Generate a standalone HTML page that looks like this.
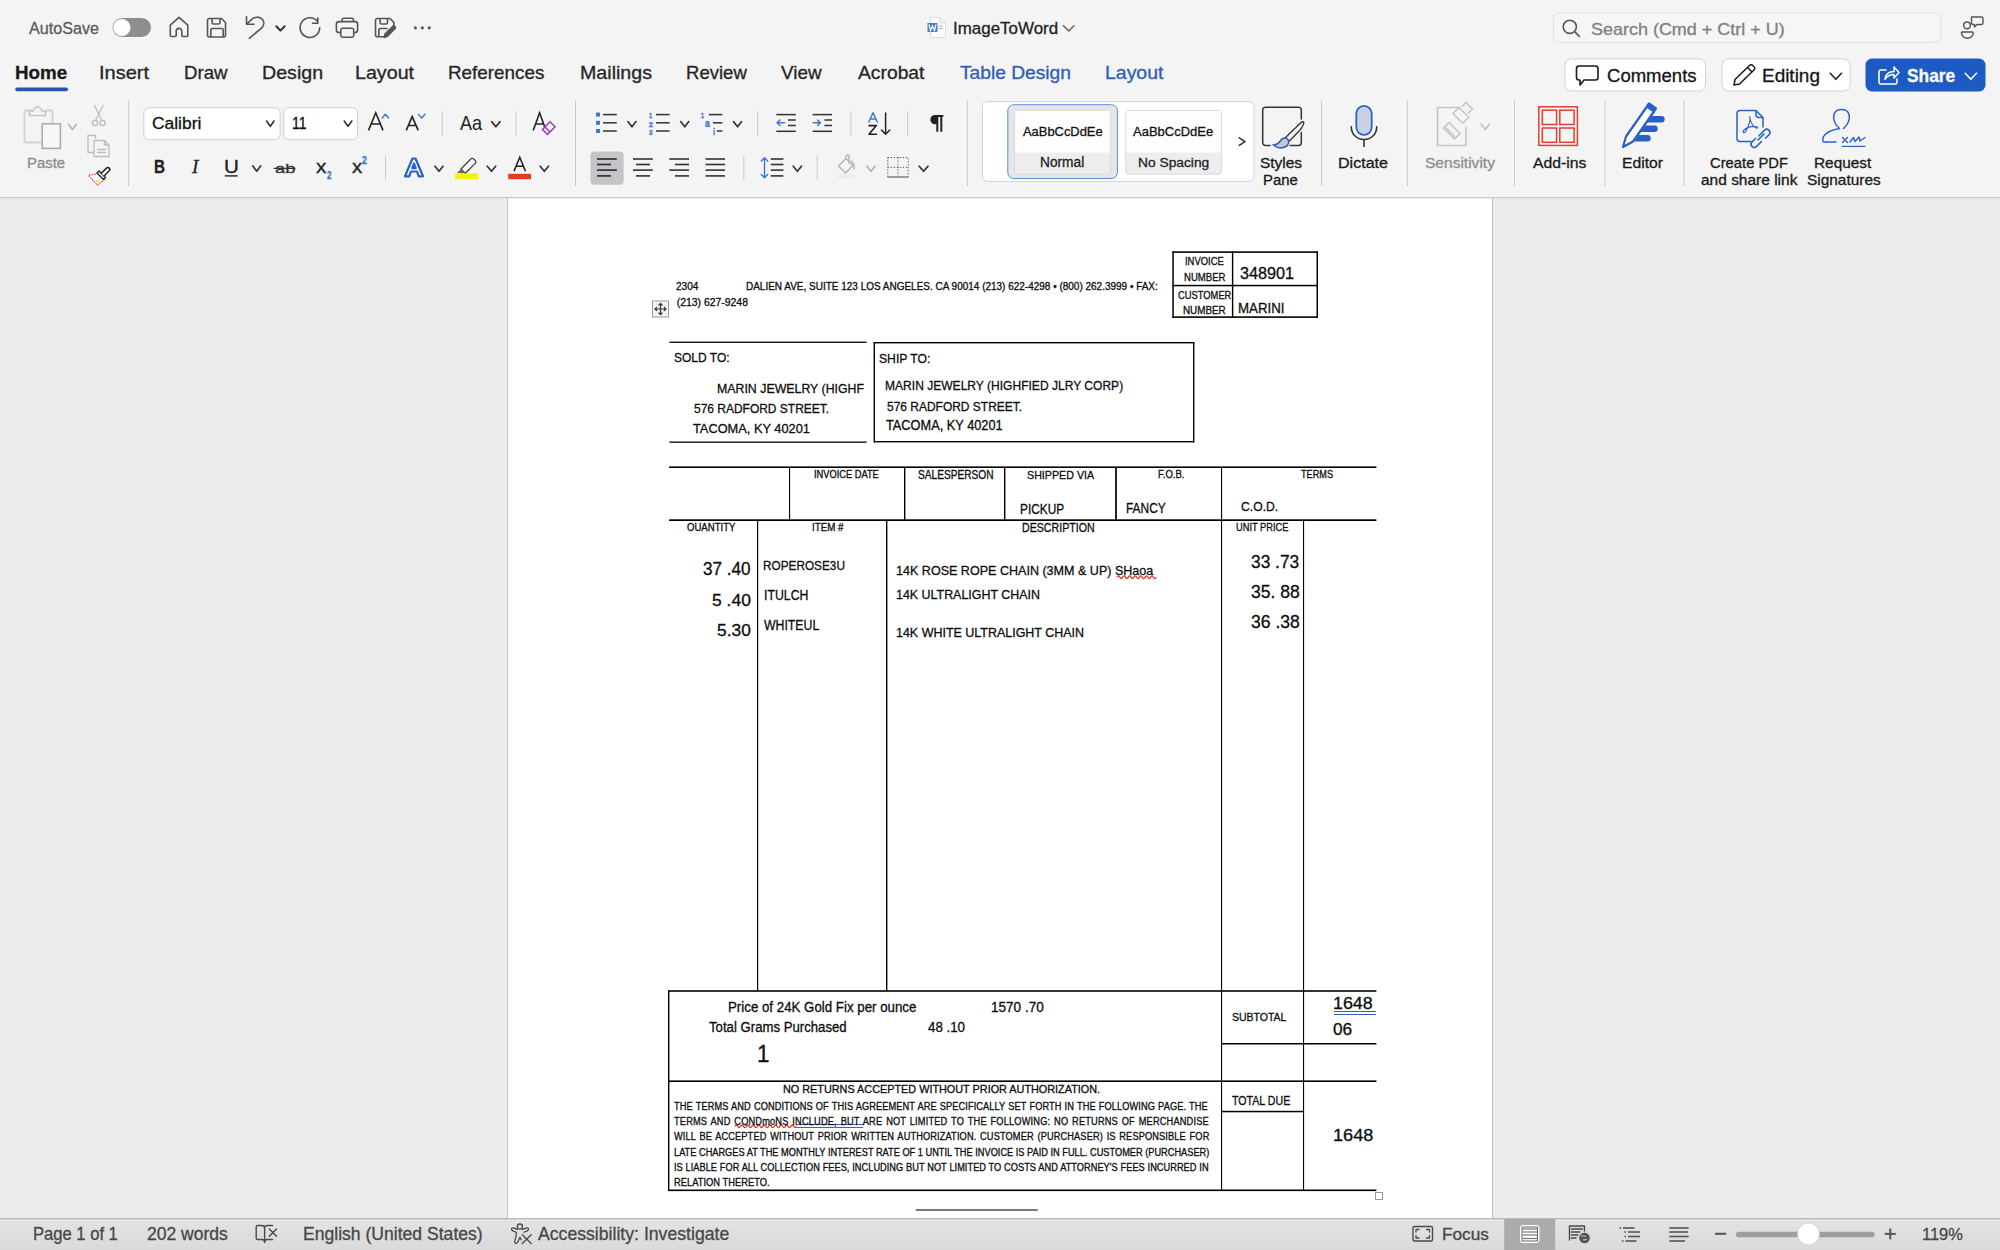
<!DOCTYPE html>
<html><head><meta charset="utf-8"><title>ImageToWord</title>
<style>
html,body{margin:0;padding:0;width:2000px;height:1250px;overflow:hidden;background:#f4f4f4;font-family:"Liberation Sans",sans-serif}
.bg{position:absolute}
.t{position:absolute;white-space:pre;transform-origin:0 0;-webkit-text-stroke-width:0.3px}
svg{position:absolute;left:0;top:0}
</style></head><body>
<div class="bg" style="left:0;top:0;width:2000px;height:197px;background:#f4f4f4"></div>
<div class="bg" style="left:0;top:198px;width:2000px;height:1020px;background:#ececec"></div>
<div class="bg" style="left:508px;top:198px;width:984px;height:1020px;background:#ffffff"></div>
<div class="bg" style="left:0;top:1219px;width:2000px;height:31px;background:linear-gradient(#e3e3e3,#dadada)"></div>
<svg width="2000" height="1250" viewBox="0 0 2000 1250">
<rect x="0" y="197" width="2000.00" height="1.30" fill="#c9cbce"/>
<rect x="507" y="198" width="1.00" height="1020.00" fill="#c3c5c8"/>
<rect x="1492" y="198" width="1.00" height="1020.00" fill="#bfc1c4"/>
<rect x="0" y="1218.2" width="2000.00" height="1.40" fill="#ababab"/>
<rect x="0" y="1219.6" width="2000.00" height="0.80" fill="#f2f2f2"/>
<rect x="1504.2" y="1219" width="51.00" height="31.00" fill="#ababab"/>
<rect x="112.5" y="18" width="38.5" height="19" rx="9.5" fill="#8e8e8e"/>
<circle cx="121.8" cy="27.5" r="8.6" fill="#fdfdfd" stroke="#d0d0d0" stroke-width="0.6"/>
<path d="M170.3 25.2 L179 17.4 L187.8 25.2 V35.5 A1 1 0 0 1 186.8 36.5 H182.8 A1 1 0 0 1 181.8 35.5 V31.2 A2.8 2.8 0 0 0 176.2 31.2 V35.5 A1 1 0 0 1 175.2 36.5 H171.3 A1 1 0 0 1 170.3 35.5 Z" fill="none" stroke="#555555" stroke-width="1.6" stroke-linecap="round" stroke-linejoin="round" />
<path d="M209.5 18.5 H221.5 L225.5 22.5 V35 A2 2 0 0 1 223.5 37 H209.5 A2 2 0 0 1 207.5 35 V20.5 A2 2 0 0 1 209.5 18.5 Z M212 18.5 V22.5 A1.5 1.5 0 0 0 213.5 24 H218.5 A1.5 1.5 0 0 0 220 22.5 V18.5 M210.8 37 V30 A1.5 1.5 0 0 1 212.3 28.5 H221.7 A1.5 1.5 0 0 1 223.2 30 V37" fill="none" stroke="#555555" stroke-width="1.6" stroke-linecap="round" stroke-linejoin="round" />
<path d="M246.5 16.8 V24.3 H254 M246.8 24 L251.5 19.5 C254.5 16.5 260 16.3 262.5 19.5 C264.5 22 264 25.5 261.8 27.8 L249.3 38.3" fill="none" stroke="#555555" stroke-width="1.6" stroke-linecap="round" stroke-linejoin="round" />
<path d="M276.3 26.2 L280.45000000000005 30.6 L284.6 26.2" fill="none" stroke="#333" stroke-width="2" stroke-linecap="round" stroke-linejoin="round"/>
<path d="M317.4 21.3 A9.8 9.8 0 1 0 319.7 27.8 M317.8 18 V23.2 H312.6" fill="none" stroke="#555555" stroke-width="1.6" stroke-linecap="round" stroke-linejoin="round" />
<path d="M342 21.6 V20 A1.7 1.7 0 0 1 343.7 18.3 H351.8 A1.7 1.7 0 0 1 353.5 20 V21.6 M340.7 32.5 H339 A2.6 2.6 0 0 1 336.4 29.9 V24.2 A2.6 2.6 0 0 1 339 21.6 H355 A2.6 2.6 0 0 1 357.6 24.2 V29.9 A2.6 2.6 0 0 1 355 32.5 H353.7 M342.5 28.2 H352 A1.7 1.7 0 0 1 353.7 29.9 V35.5 A1.7 1.7 0 0 1 352 37.2 H342.5 A1.7 1.7 0 0 1 340.8 35.5 V29.9 A1.7 1.7 0 0 1 342.5 28.2 Z" fill="none" stroke="#555555" stroke-width="1.6" stroke-linecap="round" stroke-linejoin="round" />
<path d="M377.5 18.5 H390 L393.8 22.3 V25.5 M385 36.8 H377.5 A2 2 0 0 1 375.5 34.8 V20.5 A2 2 0 0 1 377.5 18.5 M380 18.5 V22.5 A1.5 1.5 0 0 0 381.5 24 H386 A1.5 1.5 0 0 0 387.5 22.5 V18.5 M378.8 36.8 V30 A1.5 1.5 0 0 1 380.3 28.5 H387" fill="none" stroke="#555555" stroke-width="1.6" stroke-linecap="round" stroke-linejoin="round" />
<path d="M384 37.6 L384.8 34 L392.5 26.3 A1.7 1.7 0 0 1 395 28.8 L387.3 36.5 Z" fill="#555" stroke="#555" stroke-width="1.2" stroke-linecap="round" stroke-linejoin="round" />
<circle cx="415.4" cy="27.8" r="1.6" fill="#555"/>
<circle cx="422.3" cy="27.8" r="1.6" fill="#555"/>
<circle cx="429.2" cy="27.8" r="1.6" fill="#555"/>
<path d="M930.5 17.5 H940 L945.5 23 V37.5 H930.5 Z" fill="#fbfbfb" stroke="#d6d6d6" stroke-width="0.8"/>
<path d="M940 17.5 V23 H945.5" fill="#eee" stroke="#d6d6d6" stroke-width="0.8"/>
<rect x="927.5" y="23" width="10.00" height="9.00" fill="#4a7fd0"/>
<path d="M929 24.5 L930.5 30.5 L932.5 26 L934.5 30.5 L936 24.5" fill="none" stroke="#fff" stroke-width="1.2"/>
<rect x="938.5" y="25.5" width="4.50" height="1.00" fill="#bbb"/>
<rect x="938.5" y="28" width="4.50" height="1.00" fill="#bbb"/>
<path d="M1063.5 25.8 L1068.75 31 L1074 25.8" fill="none" stroke="#666" stroke-width="1.6" stroke-linecap="round" stroke-linejoin="round"/>
<rect x="1553.5" y="12.8" width="387.5" height="29.5" rx="6" fill="#f6f6f6" stroke="#e1e1e1" stroke-width="1"/>
<path d="M1575.3 32.3 L1579.5 36.5" fill="none" stroke="#555555" stroke-width="1.7" stroke-linecap="round" stroke-linejoin="round" />
<circle cx="1569.8" cy="26.8" r="6.6" fill="none" stroke="#555" stroke-width="1.6"/>
<circle cx="1967" cy="25.3" r="3.4" fill="none" stroke="#555" stroke-width="1.5"/>
<path d="M1962 32 H1972.5 C1973.2 32 1973.2 32.5 1973.2 33 C1973.2 36 1970.5 38.2 1967.5 38.2 C1964.5 38.2 1961.5 36 1961.5 33 C1961.5 32.5 1961.5 32 1962 32 Z" fill="none" stroke="#555555" stroke-width="1.5" stroke-linecap="round" stroke-linejoin="round" />
<path d="M1971.5 17 H1981.5 A1.5 1.5 0 0 1 1983 18.5 V23 A1.5 1.5 0 0 1 1981.5 24.5 H1977 L1974.5 27 V24.5 H1973 A1.5 1.5 0 0 1 1971.5 23 Z" fill="none" stroke="#555555" stroke-width="1.4" stroke-linecap="round" stroke-linejoin="round" />
<rect x="1565" y="59" width="140.5" height="32" rx="6.5" fill="#fff" stroke="#d3d3d3" stroke-width="1"/>
<path d="M1579 66 H1595.5 A2.5 2.5 0 0 1 1598 68.5 V77.5 A2.5 2.5 0 0 1 1595.5 80 H1584 L1580 85 V80 H1579 A2.5 2.5 0 0 1 1576.5 77.5 V68.5 A2.5 2.5 0 0 1 1579 66 Z" fill="none" stroke="#1a1a1a" stroke-width="1.6" stroke-linecap="round" stroke-linejoin="round" />
<rect x="1722" y="59" width="128" height="32" rx="6.5" fill="#fff" stroke="#d3d3d3" stroke-width="1"/>
<path d="M1734 85 L1735 79.5 L1749.5 65.5 A2.2 2.2 0 0 1 1752.8 65.5 L1754 66.7 A2.2 2.2 0 0 1 1754 70 L1739.5 84 Z M1747.5 67.5 L1752 72" fill="none" stroke="#1a1a1a" stroke-width="1.5" stroke-linecap="round" stroke-linejoin="round" />
<path d="M1830.2 73.3 L1835.85 79.3 L1841.5 73.3" fill="none" stroke="#222" stroke-width="1.6" stroke-linecap="round" stroke-linejoin="round"/>
<rect x="1865.5" y="58.5" width="120" height="33" rx="6.5" fill="#1e5ac4"/>
<path d="M1886 70 H1881 A2 2 0 0 0 1879 72 V82 A2 2 0 0 0 1881 84 H1895 A2 2 0 0 0 1897 82 V79" fill="none" stroke="#fff" stroke-width="1.6" stroke-linecap="round" stroke-linejoin="round" />
<path d="M1885 79.5 C1885.5 74 1889 71.5 1894 71.5 V67 L1899 72.5 L1894 78 V74.5 C1890 74.5 1887 76 1885 79.5 Z" fill="none" stroke="#fff" stroke-width="1.5" stroke-linecap="round" stroke-linejoin="round" />
<path d="M1965.2 73.3 L1970.85 79.3 L1976.5 73.3" fill="none" stroke="#fff" stroke-width="1.6" stroke-linecap="round" stroke-linejoin="round"/>
<rect x="15.3" y="87.4" width="52.7" height="3.8" rx="1.9" fill="#2454b5"/>
<rect x="128.1" y="100.5" width="1.00" height="85.50" fill="#cbcbcb"/>
<rect x="575.0" y="100.5" width="1.00" height="85.50" fill="#cbcbcb"/>
<rect x="966.9" y="100.5" width="1.00" height="85.50" fill="#cbcbcb"/>
<rect x="1321.0" y="100.5" width="1.00" height="85.50" fill="#cbcbcb"/>
<rect x="1406.9" y="100.5" width="1.00" height="85.50" fill="#cbcbcb"/>
<rect x="1514.0" y="100.5" width="1.00" height="85.50" fill="#cbcbcb"/>
<rect x="1604.5" y="100.5" width="1.00" height="85.50" fill="#cbcbcb"/>
<rect x="1683.5" y="100.5" width="1.00" height="85.50" fill="#cbcbcb"/>
<rect x="441.8" y="111.5" width="1.00" height="24.30" fill="#cbcbcb"/>
<rect x="515.5" y="111.5" width="1.00" height="24.30" fill="#cbcbcb"/>
<rect x="757.1" y="111.5" width="1.00" height="24.30" fill="#cbcbcb"/>
<rect x="850.3" y="111.5" width="1.00" height="24.30" fill="#cbcbcb"/>
<rect x="907.1" y="111.5" width="1.00" height="24.30" fill="#cbcbcb"/>
<rect x="385.0" y="155.5" width="1.00" height="24.50" fill="#cbcbcb"/>
<rect x="743.3" y="155.5" width="1.00" height="24.50" fill="#cbcbcb"/>
<rect x="816.7" y="155.5" width="1.00" height="24.50" fill="#cbcbcb"/>
<path d="M32 110.5 H26 A1.5 1.5 0 0 0 24.5 112 V141 A1.5 1.5 0 0 0 26 142.5 H42 M46 110.5 H51 A1.5 1.5 0 0 1 52.5 112 V123" fill="none" stroke="#d2d2d2" stroke-width="1.8" stroke-linecap="round" stroke-linejoin="round" />
<path d="M29.5 115.5 V111 H33.5 A4 4 0 0 1 41.5 111 H45.5 V115.5 Z" fill="none" stroke="#c4c4c4" stroke-width="1.5" stroke-linecap="round" stroke-linejoin="round" />
<rect x="42.2" y="123.8" width="18.2" height="24.6" fill="#f7f7f7" stroke="#a9a9a9" stroke-width="1.5"/>
<path d="M68.6 124.3 L72.44999999999999 129.5 L76.3 124.3" fill="none" stroke="#b4b4b4" stroke-width="1.7" stroke-linecap="round" stroke-linejoin="round"/>
<path d="M94.5 105.5 L101.5 119.5 M103 105.5 L96 119.5" fill="none" stroke="#bcbcbc" stroke-width="1.3" stroke-linecap="round" stroke-linejoin="round" />
<circle cx="95" cy="123" r="2.6" fill="none" stroke="#bbb" stroke-width="1.3"/><circle cx="102.5" cy="123" r="2.6" fill="none" stroke="#bbb" stroke-width="1.3"/>
<path d="M95.5 138 V135.5 H88 V152.5 H93.5" fill="none" stroke="#bcbcbc" stroke-width="1.3" stroke-linecap="round" stroke-linejoin="round" />
<path d="M94 140.5 H104.5 L109 145 V156.5 H94 Z M104.5 140.5 V145 H109 M97.5 149.5 H105.5 M97.5 152.5 H105.5" fill="none" stroke="#bcbcbc" stroke-width="1.3" stroke-linecap="round" stroke-linejoin="round" />
<path d="M98.3 173.8 L104.2 179.7 L97.3 185.2 L88.4 175.2 Z" fill="#fff" stroke="#e5402f" stroke-width="1.2" stroke-dasharray="1.5 1.1"/>
<circle cx="97" cy="181" r="0.9" fill="#f0e030"/><circle cx="99" cy="181" r="0.9" fill="#f0e030"/>
<path d="M97 173 L99 171 L105.5 177.5 L103.5 179.5 Z" fill="#fff" stroke="#222" stroke-width="1.4" stroke-linejoin="round"/>
<path d="M101.3 173.3 L106.5 168.1 A1.9 1.9 0 0 1 109.2 170.8 L104 176" fill="#fff" stroke="#222" stroke-width="1.5" stroke-linecap="round" stroke-linejoin="round" />
<rect x="143.8" y="107.7" width="136.3" height="32" rx="5" fill="#fff" stroke="#cfcfcf" stroke-width="1"/>
<rect x="283.8" y="107.7" width="73.8" height="32" rx="5" fill="#fff" stroke="#cfcfcf" stroke-width="1"/>
<path d="M266.6 121 L270.3 126.3 L274 121" fill="none" stroke="#333" stroke-width="1.6" stroke-linecap="round" stroke-linejoin="round"/>
<path d="M344.2 121 L348.0 126.3 L351.8 121" fill="none" stroke="#333" stroke-width="1.6" stroke-linecap="round" stroke-linejoin="round"/>
<path d="M368.5 130.4 L375.75 112.8 L383 130.4 M371.71 124.06 H379.79" fill="none" stroke="#222" stroke-width="1.6" stroke-linejoin="miter"/>
<path d="M382.2 118 L385.4 114.2 L388.6 118" fill="none" stroke="#3a78d0" stroke-width="1.4" stroke-linecap="round" stroke-linejoin="round"/>
<path d="M406.2 130.4 L412.2 116.6 L418.2 130.4 M408.96 125.43 H415.44" fill="none" stroke="#222" stroke-width="1.6" stroke-linejoin="miter"/>
<path d="M418.4 114.2 L421.7 118 L425 114.2" fill="none" stroke="#3a78d0" stroke-width="1.4" stroke-linecap="round" stroke-linejoin="round"/>
<path d="M491.7 121.6 L495.85 126.8 L500 121.6" fill="none" stroke="#333" stroke-width="1.7" stroke-linecap="round" stroke-linejoin="round"/>
<path d="M533.2 130.4 L539.6 112.8 L546 130.4 M536.10 124.06 H543.10" fill="none" stroke="#222" stroke-width="1.6" stroke-linejoin="miter"/>
<path d="M542.5 129.5 L550 121.8 L555 126.8 L547.5 134.3 Z M545 127 L550 132" fill="#fff" stroke="#a03cc0" stroke-width="1.6" stroke-linejoin="miter"/>
<rect x="224.8" y="175.2" width="12.90" height="1.40" fill="#222"/>
<path d="M252.8 166 L256.70000000000005 171.2 L260.6 166" fill="none" stroke="#333" stroke-width="1.7" stroke-linecap="round" stroke-linejoin="round"/>
<rect x="273.6" y="167.8" width="21.90" height="1.20" fill="#333"/>
<path d="M405 176.3 L412.5 158.5 H415.5 L423 176.3 H418.8 L417 171.5 H411 L409.2 176.3 Z M412.3 168.2 H415.7 L414 163.5 Z" fill="#fff" stroke="#2760c8" stroke-width="2.2" stroke-linejoin="round"/>
<path d="M435 166.2 L439.0 171.3 L443 166.2" fill="none" stroke="#333" stroke-width="1.7" stroke-linecap="round" stroke-linejoin="round"/>
<path d="M461 169 L470.5 159.3 A2.2 2.2 0 0 1 474 159.3 L475 160.3 A2.2 2.2 0 0 1 475 163.6 L465.3 173.3 Z" fill="#fff" stroke="#444" stroke-width="1.3"/>
<path d="M461 169 L457 173 L460 173 L465.3 173.3 Z" fill="#666"/>
<rect x="455.2" y="173.4" width="23.00" height="5.80" fill="#f7f10a"/>
<path d="M487.3 166.2 L491.5 171.3 L495.7 166.2" fill="none" stroke="#333" stroke-width="1.7" stroke-linecap="round" stroke-linejoin="round"/>
<path d="M514 171.3 L519.75 157.3 L525.5 171.3 M516.67 166.26 H522.83" fill="none" stroke="#222" stroke-width="1.6" stroke-linejoin="miter"/>
<rect x="508.2" y="173.8" width="22.80" height="5.40" fill="#e63b1f"/>
<path d="M540.2 166.2 L544.35 171.3 L548.5 166.2" fill="none" stroke="#333" stroke-width="1.7" stroke-linecap="round" stroke-linejoin="round"/>
<rect x="596" y="112.6" width="4.00" height="4.00" fill="#3a78d0"/>
<rect x="603" y="113.85" width="13.80" height="1.50" fill="#333"/>
<rect x="596" y="120.8" width="4.00" height="4.00" fill="#3a78d0"/>
<rect x="603" y="122.05" width="13.80" height="1.50" fill="#333"/>
<rect x="596" y="129" width="4.00" height="4.00" fill="#3a78d0"/>
<rect x="603" y="130.25" width="13.80" height="1.50" fill="#333"/>
<path d="M627.9 121.6 L631.95 126.8 L636 121.6" fill="none" stroke="#333" stroke-width="1.7" stroke-linecap="round" stroke-linejoin="round"/>
<rect x="656" y="113.85" width="13.60" height="1.50" fill="#333"/>
<rect x="656" y="122.05" width="13.60" height="1.50" fill="#333"/>
<rect x="656" y="130.25" width="13.60" height="1.50" fill="#333"/>
<path d="M680.7 121.6 L684.75 126.8 L688.8 121.6" fill="none" stroke="#333" stroke-width="1.7" stroke-linecap="round" stroke-linejoin="round"/>
<rect x="708.8" y="113.85" width="13.60" height="1.50" fill="#333"/>
<rect x="713" y="122.05" width="9.40" height="1.50" fill="#333"/>
<rect x="716.9" y="130.25" width="5.50" height="1.50" fill="#333"/>
<path d="M733.5 121.6 L737.55 126.8 L741.6 121.6" fill="none" stroke="#333" stroke-width="1.7" stroke-linecap="round" stroke-linejoin="round"/>
<rect x="776.3" y="113.85" width="19.50" height="1.50" fill="#333"/>
<rect x="788" y="119.25" width="7.80" height="1.50" fill="#333"/>
<rect x="788" y="124.75" width="7.80" height="1.50" fill="#333"/>
<rect x="776.3" y="130.55" width="19.50" height="1.50" fill="#333"/>
<path d="M784.5 122.8 H777 M780 120 L777 122.8 L780 125.6" fill="none" stroke="#3a78d0" stroke-width="1.4" stroke-linecap="round" stroke-linejoin="round" />
<rect x="812.6" y="113.85" width="19.40" height="1.50" fill="#333"/>
<rect x="824.4" y="119.25" width="7.60" height="1.50" fill="#333"/>
<rect x="824.4" y="124.75" width="7.60" height="1.50" fill="#333"/>
<rect x="812.6" y="130.55" width="19.40" height="1.50" fill="#333"/>
<path d="M813 122.8 H820.5 M817.5 120 L820.5 122.8 L817.5 125.6" fill="none" stroke="#3a78d0" stroke-width="1.4" stroke-linecap="round" stroke-linejoin="round" />
<path d="M868.8 122 L873 112.8 L877.3 122 M870.3 119 H875.8" fill="none" stroke="#3a78d0" stroke-width="1.5" stroke-linecap="round" stroke-linejoin="round" />
<path d="M869 125.6 H876.3 L869 134.3 H876.5" fill="none" stroke="#222" stroke-width="1.6" stroke-linecap="round" stroke-linejoin="round" />
<path d="M885.6 113 V134 M881.5 130 L885.6 134.2 L889.8 130" fill="none" stroke="#222" stroke-width="1.5" stroke-linecap="round" stroke-linejoin="round" />
<path d="M940.5 115 H935 A4.6 4.6 0 0 0 935 124.3 H936.3 V131.8 H938.3 V117 H940.3 V131.8 H942.3 V117 H943.3 V115 Z" fill="#222"/>
<rect x="590.5" y="151.4" width="33.2" height="33.3" rx="4" fill="#c4c5c8"/>
<rect x="597" y="158.2" width="19.80" height="1.60" fill="#2a2a2a"/>
<rect x="633" y="158.2" width="19.80" height="1.60" fill="#333"/>
<rect x="669.3" y="158.2" width="19.70" height="1.60" fill="#333"/>
<rect x="705.5" y="158.2" width="19.50" height="1.60" fill="#333"/>
<rect x="770.8" y="158.2" width="12.60" height="1.60" fill="#333"/>
<rect x="597" y="163.7" width="14.00" height="1.60" fill="#2a2a2a"/>
<rect x="636" y="163.7" width="14.00" height="1.60" fill="#333"/>
<rect x="675" y="163.7" width="14.00" height="1.60" fill="#333"/>
<rect x="705.5" y="163.7" width="19.50" height="1.60" fill="#333"/>
<rect x="770.8" y="163.7" width="12.60" height="1.60" fill="#333"/>
<rect x="597" y="169.29999999999998" width="19.80" height="1.60" fill="#2a2a2a"/>
<rect x="633" y="169.29999999999998" width="19.80" height="1.60" fill="#333"/>
<rect x="669.3" y="169.29999999999998" width="19.70" height="1.60" fill="#333"/>
<rect x="705.5" y="169.29999999999998" width="19.50" height="1.60" fill="#333"/>
<rect x="770.8" y="169.29999999999998" width="12.60" height="1.60" fill="#333"/>
<rect x="597" y="175.1" width="14.00" height="1.60" fill="#2a2a2a"/>
<rect x="636" y="175.1" width="14.00" height="1.60" fill="#333"/>
<rect x="675" y="175.1" width="14.00" height="1.60" fill="#333"/>
<rect x="705.5" y="175.1" width="19.50" height="1.60" fill="#333"/>
<rect x="770.8" y="175.1" width="12.60" height="1.60" fill="#333"/>
<path d="M764.5 158 V177.5 M761.3 161 L764.5 157.7 L767.7 161 M761.3 174.5 L764.5 177.8 L767.7 174.5" fill="none" stroke="#3a78d0" stroke-width="1.4" stroke-linecap="round" stroke-linejoin="round" />
<path d="M793.2 166.2 L797.35 171.3 L801.5 166.2" fill="none" stroke="#333" stroke-width="1.7" stroke-linecap="round" stroke-linejoin="round"/>
<path d="M838.5 166 L846 158.5 L853 165.5 L845.5 173 Z M846 158.5 V156.5 A1.5 1.5 0 0 1 849 156.5 V163 M851 161 C854 162 854.5 165 854 169" fill="none" stroke="#b0b0b0" stroke-width="1.3" stroke-linecap="round" stroke-linejoin="round" />
<rect x="838" y="174.2" width="17.00" height="4.40" fill="#ececec"/>
<path d="M867 166.2 L871.0 171.3 L875 166.2" fill="none" stroke="#b0b0b0" stroke-width="1.6" stroke-linecap="round" stroke-linejoin="round"/>
<path d="M887.8 157.5 H908.2 V177 M887.8 157.5 V177 M898 157.5 V177 M887.8 167.3 H908.2" fill="none" stroke="#555" stroke-width="1" stroke-dasharray="1.3 1.7"/>
<rect x="887.5" y="176.2" width="21.00" height="1.60" fill="#888"/>
<path d="M919.2 166.2 L923.6 171.3 L928 166.2" fill="none" stroke="#333" stroke-width="1.7" stroke-linecap="round" stroke-linejoin="round"/>
<rect x="982.5" y="101.5" width="271.5" height="80" rx="5" fill="#fff" stroke="#d3d3d3" stroke-width="1"/>
<rect x="1007.8" y="104.7" width="109.6" height="73.8" rx="6" fill="#e6e6e6" stroke="#5a8de0" stroke-width="1"/>
<rect x="1014.6" y="110.5" width="95.8" height="63.7" rx="3" fill="#ededed" stroke="#dadada" stroke-width="1"/>
<rect x="1015.2" y="111" width="94.60" height="41.60" fill="#fdfdfd"/>
<rect x="1125.7" y="110.5" width="95.9" height="63.7" rx="3" fill="#ededed" stroke="#dadada" stroke-width="1"/>
<rect x="1126.3" y="111" width="94.70" height="41.60" fill="#fdfdfd"/>
<path d="M1239.3 137.8 L1245 141.6 L1239.3 145.4" fill="none" stroke="#333" stroke-width="1.6" stroke-linecap="round" stroke-linejoin="round" />
<path d="M1301.3 119 V110 A2.7 2.7 0 0 0 1298.6 107.3 H1265.4 A2.7 2.7 0 0 0 1262.7 110 V142.7 A2.7 2.7 0 0 0 1265.4 145.4 H1270 M1290.2 145.4 H1298.6 A2.7 2.7 0 0 0 1301.3 142.7 V132.6" fill="none" stroke="#333" stroke-width="1.5" stroke-linecap="round" stroke-linejoin="round" />
<path d="M1285.5 137.5 L1300 123.5 C1302 121.5 1304 121 1303.8 123 C1303.5 125 1302 127.5 1300 130 L1289.5 141" fill="none" stroke="#333" stroke-width="1.3" stroke-linecap="round" stroke-linejoin="round" />
<path d="M1273.5 145 C1277 144.8 1279 143 1281 140 C1283 137.5 1286.5 137.5 1288 139.5 C1289.5 141.5 1288.5 145 1286 146.5 C1282 148.5 1277 148 1273.5 145 Z" fill="#c3c7ce" stroke="#1f5cc6" stroke-width="1.5"/>
<rect x="1356.3" y="105.8" width="15.4" height="29" rx="7.7" fill="#c8d2e2" stroke="#2b63c6" stroke-width="1.8"/>
<path d="M1351.3 126.8 C1351.3 134.5 1357 139.5 1364 139.5 C1371 139.5 1376.7 134.5 1376.7 126.8 M1364 139.5 V146.5" fill="none" stroke="#333" stroke-width="1.6" stroke-linecap="round" stroke-linejoin="round" />
<path d="M1459 107.5 H1437.5 V145.5 H1466 V127" fill="none" stroke="#c4c4c4" stroke-width="1.6" stroke-linecap="round" stroke-linejoin="round" />
<path d="M1443.5 128 L1449 122.5 L1460 133.5 L1454.5 139 Z M1446.2 128 L1454.5 136.3" fill="none" stroke="#c4c4c4" stroke-width="1.5" stroke-linecap="round" stroke-linejoin="round" />
<path d="M1453 113.5 L1459 107.5 L1468.8 117.3 L1462.8 123.3 Z M1462 106.5 L1466 102.5 L1472.5 109 L1468.5 113" fill="none" stroke="#c4c4c4" stroke-width="1.5" stroke-linecap="round" stroke-linejoin="round" />
<path d="M1481.2 124.2 L1485.3000000000002 129.6 L1489.4 124.2" fill="none" stroke="#c0c0c0" stroke-width="1.6" stroke-linecap="round" stroke-linejoin="round"/>
<rect x="1538.8" y="106.8" width="38.6" height="38.6" fill="none" stroke="#e0402e" stroke-width="1.5"/>
<rect x="1542.3" y="110.2" width="14.3" height="14.3" fill="none" stroke="#e0402e" stroke-width="1.5"/>
<rect x="1559.8" y="110.2" width="14.3" height="14.3" fill="none" stroke="#e0402e" stroke-width="1.5"/>
<rect x="1542.3" y="128" width="14.3" height="14.3" fill="none" stroke="#e0402e" stroke-width="1.5"/>
<rect x="1559.8" y="128" width="14.3" height="14.3" fill="none" stroke="#e0402e" stroke-width="1.5"/>
<path d="M1623 147 L1626 136.5 L1647 106.5 L1654 111.5 L1633 141.5 Z" fill="#fff" stroke="#2a5fc6" stroke-width="2.2" stroke-linejoin="round"/>
<path d="M1647.5 105 L1649 103.5 L1656 108.5 L1654.5 110.5 Z" fill="#2a5fc6" stroke="#2a5fc6" stroke-width="2.2" stroke-linejoin="round"/>
<path d="M1651 116 H1661.5 A3.2 3.2 0 0 1 1661.5 122.4 H1647 Z M1645 125.5 H1654.5 A3.2 3.2 0 0 1 1654.5 131.9 H1640.5 Z M1638.5 135 H1647.5 A3.2 3.2 0 0 1 1647.5 141.4 H1634.5 Z" fill="#2a5fc6"/>
<path d="M1756 110.5 H1740 A3 3 0 0 0 1737 113.5 V138.5 A3 3 0 0 0 1740 141.5 H1751 M1756 110.5 L1763 117.5 V127 M1756 110.5 V114.5 A3 3 0 0 0 1759 117.5 H1763" fill="none" stroke="#2a5fc6" stroke-width="1.5" stroke-linecap="round" stroke-linejoin="round" />
<path d="M1749.5 116.5 C1751 119 1749 125 1746 131 C1744.5 134 1741.5 132.5 1744 130 C1747 127.5 1752 126 1756 126.5 C1758.5 127 1758 128.5 1756 128 C1753 127 1750.5 121 1749.5 116.5 Z" fill="none" stroke="#2a5fc6" stroke-width="1.1" stroke-linecap="round" stroke-linejoin="round" />
<path d="M1759 135.8 L1764.5 130.3 A3 3 0 0 1 1769 134.8 L1765.5 138.3 M1761.5 141.5 L1756.5 146.5 A3 3 0 0 1 1752 142 L1755.5 138.5 M1758 140 L1764 134" fill="none" stroke="#2a5fc6" stroke-width="1.6" stroke-linecap="round" stroke-linejoin="round" />
<path d="M1843.5 128.5 C1849 124 1850 118 1849 114.5 C1848 111 1845 109.5 1841.5 109.5 C1838 109.5 1835 111 1834 114.5 C1833 118 1834 124 1839.5 128.5 C1834 129.5 1826 132 1823.5 136.5 C1822.5 139 1822.5 142 1824 142 H1836" fill="none" stroke="#2a5fc6" stroke-width="1.5" stroke-linecap="round" stroke-linejoin="round" />
<path d="M1842.5 137.5 L1847.5 142.5 M1847.5 137.5 L1842.5 142.5 M1850 142 L1853.5 137.5 L1855 141.5 L1859 137 L1860 141 L1865 137.5" fill="none" stroke="#2a5fc6" stroke-width="1.4" stroke-linecap="round" stroke-linejoin="round" />
<rect x="1841.8" y="145.8" width="23.50" height="1.20" fill="#2a5fc6"/>
<rect x="1172.3" y="251.3" width="145.70" height="1.60" fill="#000"/>
<rect x="1172.3" y="316.3" width="145.70" height="1.60" fill="#000"/>
<rect x="1172.3" y="251.3" width="1.50" height="66.60" fill="#000"/>
<rect x="1316.5" y="251.3" width="1.50" height="66.60" fill="#000"/>
<rect x="1172.3" y="284.8" width="145.70" height="1.50" fill="#000"/>
<rect x="1231.9" y="251.3" width="1.40" height="66.60" fill="#000"/>
<rect x="669.4" y="341.6" width="197.20" height="1.30" fill="#000"/>
<rect x="669.4" y="441.5" width="197.20" height="1.30" fill="#000"/>
<rect x="873.7" y="342" width="320.60" height="1.40" fill="#000"/>
<rect x="873.7" y="441" width="320.60" height="1.40" fill="#000"/>
<rect x="873.6" y="342" width="1.40" height="100.40" fill="#000"/>
<rect x="1193" y="342" width="1.40" height="100.40" fill="#000"/>
<rect x="669.1" y="466.4" width="707.30" height="1.60" fill="#000"/>
<rect x="669.1" y="519.3" width="707.30" height="1.70" fill="#000"/>
<rect x="789" y="467" width="1.10" height="53.00" fill="#000"/>
<rect x="904" y="467" width="1.40" height="53.00" fill="#000"/>
<rect x="1004" y="467" width="1.40" height="53.00" fill="#000"/>
<rect x="1115" y="467" width="2.00" height="53.00" fill="#252525"/>
<rect x="1221" y="467" width="1.10" height="723.50" fill="#000"/>
<rect x="757" y="520" width="1.20" height="471.00" fill="#000"/>
<rect x="886" y="520" width="1.40" height="471.00" fill="#000"/>
<rect x="1303" y="520" width="1.10" height="670.50" fill="#000"/>
<rect x="668.3" y="990.2" width="708.10" height="1.60" fill="#000"/>
<rect x="668.3" y="1080.4" width="708.10" height="1.60" fill="#000"/>
<rect x="668.3" y="1189.5" width="708.10" height="1.60" fill="#000"/>
<rect x="668" y="990.5" width="1.40" height="200.50" fill="#000"/>
<rect x="1221.5" y="1043" width="154.90" height="1.50" fill="#000"/>
<rect x="1221.5" y="1110.8" width="81.90" height="1.50" fill="#000"/>
<path d="M1117 577.2 Q1118.4 574.6 1119.8 577.2 Q1121.2 579.8000000000001 1122.6 577.2 Q1124.0 574.6 1125.4 577.2 Q1126.8 579.8000000000001 1128.2 577.2 Q1129.6 574.6 1131.0 577.2 Q1132.4 579.8000000000001 1133.8 577.2 Q1135.2 574.6 1136.6 577.2 Q1138.0 579.8000000000001 1139.4 577.2 Q1140.8 574.6 1142.2 577.2 Q1143.6 579.8000000000001 1145.0 577.2 Q1146.4 574.6 1147.8 577.2 Q1149.2 579.8000000000001 1150.6 577.2 Q1152.0 574.6 1153.4 577.2 Q1154.8 579.8000000000001 1156.2 577.2" fill="none" stroke="#e0301e" stroke-width="1.3"/>
<path d="M735 1126.3 Q736.4 1123.7 737.8 1126.3 Q739.2 1128.8999999999999 740.6 1126.3 Q742.0 1123.7 743.4 1126.3 Q744.8 1128.8999999999999 746.2 1126.3 Q747.6 1123.7 749.0 1126.3 Q750.4 1128.8999999999999 751.8 1126.3 Q753.2 1123.7 754.6 1126.3 Q756.0 1128.8999999999999 757.4 1126.3 Q758.8 1123.7 760.2 1126.3 Q761.6 1128.8999999999999 763.0 1126.3 Q764.4 1123.7 765.8 1126.3 Q767.2 1128.8999999999999 768.6 1126.3 Q770.0 1123.7 771.4 1126.3 Q772.8 1128.8999999999999 774.2 1126.3 Q775.6 1123.7 777.0 1126.3 Q778.4 1128.8999999999999 779.8 1126.3 Q781.2 1123.7 782.6 1126.3 Q784.0 1128.8999999999999 785.4 1126.3 Q786.8 1123.7 788.2 1126.3 Q789.6 1128.8999999999999 791.0 1126.3 Q792.4 1123.7 793.8 1126.3 Q795.2 1128.8999999999999 796.6 1126.3" fill="none" stroke="#e0301e" stroke-width="1.3"/>
<rect x="796.6" y="1124" width="66.40" height="1.00" fill="#2f62c8"/>
<rect x="796.6" y="1127" width="66.40" height="1.00" fill="#2f62c8"/>
<rect x="1333.8" y="1011" width="42.20" height="1.00" fill="#2f62c8"/>
<rect x="1333.8" y="1014" width="42.20" height="1.00" fill="#2f62c8"/>
<rect x="652.5" y="301" width="16" height="16" fill="#f4f4f4" stroke="#9a9a9a" stroke-width="1"/>
<path d="M660.5 303.5 V314.5 M655 309 H666 M658.8 305.2 L660.5 303.5 L662.2 305.2 M658.8 312.8 L660.5 314.5 L662.2 312.8 M656.7 307.3 L655 309 L656.7 310.7 M664.3 307.3 L666 309 L664.3 310.7" fill="none" stroke="#333" stroke-width="1.2" stroke-linecap="round" stroke-linejoin="round" />
<rect x="1375.5" y="1192.5" width="7" height="7" fill="#fff" stroke="#999" stroke-width="1"/>
<rect x="915.7" y="1209" width="122.00" height="2.00" fill="#7a7a7a"/>
<path d="M264.6 1242.5 V1228 C264.6 1226.3 263.3 1225.5 261.5 1225.5 H257.8 A1.6 1.6 0 0 0 256.2 1227.1 V1237.9 A1.6 1.6 0 0 0 257.8 1239.5 H262 C263.5 1239.5 264.6 1240.5 264.6 1242.5 C264.6 1240.5 265.7 1239.5 267.2 1239.5 H272.6 M264.6 1228 C264.6 1226.3 265.9 1225.5 267.7 1225.5 H272.6" fill="none" stroke="#4a4a4a" stroke-width="1.4" stroke-linecap="round" stroke-linejoin="round" />
<path d="M269.3 1229 L276.5 1236.3 M276.5 1229 L269.3 1236.3" fill="none" stroke="#4a4a4a" stroke-width="1.4" stroke-linecap="round" stroke-linejoin="round" />
<circle cx="519.9" cy="1226.6" r="2.6" fill="none" stroke="#4a4a4a" stroke-width="1.3"/>
<path d="M517.5 1229.3 C516 1229.3 514.5 1228.3 513.2 1227.9 C511.5 1227.4 510.8 1229.9 512.4 1230.6 C513.8 1231.3 515.2 1231.7 516.4 1232.3 C516.3 1235.5 515.8 1238.5 514.8 1241 C514 1243 516.5 1244.3 517.6 1242.3 C518.4 1240.8 519.2 1239 520 1237.3 C520.4 1238 520.8 1238.8 521.2 1239.8 M522.3 1229.3 C524 1229.3 525.5 1228.3 526.8 1227.9 C528.5 1227.4 529.2 1229.9 527.6 1230.6 C526.4 1231.2 525.3 1231.6 524 1232.2" fill="none" stroke="#4a4a4a" stroke-width="1.3" stroke-linecap="round" stroke-linejoin="round" />
<path d="M522.3 1234.8 L531.2 1243.5 M531.2 1234.8 L522.3 1243.5" fill="none" stroke="#4a4a4a" stroke-width="1.3" stroke-linecap="round" stroke-linejoin="round" />
<path d="M1413 1231 V1228 A1.5 1.5 0 0 1 1414.5 1226.5 H1431 A1.5 1.5 0 0 1 1432.5 1228 V1239.5 A1.5 1.5 0 0 1 1431 1241 H1414.5 A1.5 1.5 0 0 1 1413 1239.5 Z" fill="none" stroke="#4a4a4a" stroke-width="1.4" stroke-linecap="round" stroke-linejoin="round" />
<path d="M1416 1232 V1229.5 H1419 M1426.5 1229.5 H1429.5 V1232 M1416 1235.5 V1238 H1419 M1426.5 1238 H1429.5 V1235.5" fill="none" stroke="#4a4a4a" stroke-width="1.3" stroke-linecap="round" stroke-linejoin="round" />
<rect x="1520.5" y="1225.5" width="18.5" height="17" rx="2" fill="#fff" stroke="#fff" stroke-width="1"/>
<rect x="1522.5" y="1228.4" width="14.50" height="1.20" fill="#777"/>
<rect x="1522.5" y="1231.4" width="14.50" height="1.20" fill="#777"/>
<rect x="1522.5" y="1234.4" width="14.50" height="1.20" fill="#777"/>
<rect x="1522.5" y="1237.9" width="14.50" height="1.20" fill="#777"/>
<rect x="1522" y="1226.5" width="16.00" height="15.50" fill="none"/>
<rect x="1522" y="1227" width="15.5" height="14" fill="none" stroke="#666" stroke-width="1"/>
<path d="M1569.5 1240 V1226 H1584.5 V1232 M1571.5 1229 H1582.5 M1571.5 1232 H1580 M1571.5 1235 H1578 M1571.5 1238 H1576" fill="none" stroke="#4a4a4a" stroke-width="1.4" stroke-linecap="round" stroke-linejoin="round" />
<circle cx="1584.5" cy="1238" r="5.8" fill="#555" stroke="#e0e0e0" stroke-width="1"/>
<path d="M1581 1236 C1583 1235 1584 1237 1586 1236 M1583 1240 C1584 1239 1586 1241 1587 1239" stroke="#ddd" stroke-width="0.9" fill="none"/>
<rect x="1619.5" y="1227.2" width="1.50" height="1.60" fill="#555"/>
<rect x="1623" y="1227.2" width="11.50" height="1.60" fill="#555"/>
<rect x="1624.5" y="1231.2" width="1.50" height="1.60" fill="#555"/>
<rect x="1628" y="1231.2" width="12.00" height="1.60" fill="#555"/>
<rect x="1624.5" y="1235.7" width="1.50" height="1.60" fill="#555"/>
<rect x="1628" y="1235.7" width="12.00" height="1.60" fill="#555"/>
<rect x="1622" y="1240.2" width="1.50" height="1.60" fill="#555"/>
<rect x="1625.5" y="1240.2" width="11.00" height="1.60" fill="#555"/>
<rect x="1669.3" y="1227.2" width="19.40" height="1.60" fill="#555"/>
<rect x="1669.3" y="1231.2" width="18.70" height="1.60" fill="#555"/>
<rect x="1669.3" y="1235.7" width="19.40" height="1.60" fill="#555"/>
<rect x="1669.3" y="1240.2" width="15.70" height="1.60" fill="#555"/>
<rect x="1715" y="1232.8" width="11.20" height="2.00" fill="#555"/>
<rect x="1736" y="1231.8" width="138.7" height="5.4" rx="2.7" fill="#9e9e9e"/>
<circle cx="1808.5" cy="1234" r="11" fill="#fff" stroke="#c9c9c9" stroke-width="0.8"/>
<rect x="1884.8" y="1232.9" width="10.90" height="2.00" fill="#555"/>
<rect x="1889.25" y="1228.5" width="2.00" height="10.80" fill="#555"/>
</svg>
<div class="t" style="left:29.00px;top:20.80px;font-size:16.90px;line-height:16.90px;color:#5a5a5a;transform:scaleX(0.9554)">AutoSave</div>
<div class="t" style="left:952.53px;top:20.00px;font-size:17.39px;line-height:17.39px;color:#222;transform:scaleX(0.9748)">ImageToWord</div>
<div class="t" style="left:1591.00px;top:22.00px;font-size:16.90px;line-height:16.90px;color:#808080;transform:scaleX(1.0636)">Search (Cmd + Ctrl + U)</div>
<div class="t" style="left:14.74px;top:64.80px;font-size:17.71px;line-height:17.71px;color:#1a1a1a;font-weight:bold;transform:scaleX(1.0592)">Home</div>
<div class="t" style="left:98.89px;top:64.80px;font-size:17.97px;line-height:17.97px;color:#262626;transform:scaleX(1.1150)">Insert</div>
<div class="t" style="left:183.96px;top:64.80px;font-size:17.97px;line-height:17.97px;color:#262626;transform:scaleX(1.0392)">Draw</div>
<div class="t" style="left:261.91px;top:64.80px;font-size:17.97px;line-height:17.97px;color:#262626;transform:scaleX(1.0938)">Design</div>
<div class="t" style="left:354.90px;top:64.80px;font-size:17.97px;line-height:17.97px;color:#262626;transform:scaleX(1.0952)">Layout</div>
<div class="t" style="left:448.44px;top:64.80px;font-size:17.71px;line-height:17.71px;color:#262626;transform:scaleX(1.0649)">References</div>
<div class="t" style="left:579.91px;top:64.80px;font-size:17.97px;line-height:17.97px;color:#262626;transform:scaleX(1.0936)">Mailings</div>
<div class="t" style="left:685.95px;top:64.80px;font-size:17.71px;line-height:17.71px;color:#262626;transform:scaleX(1.0478)">Review</div>
<div class="t" style="left:781.00px;top:64.80px;font-size:17.97px;line-height:17.97px;color:#262626;transform:scaleX(1.0493)">View</div>
<div class="t" style="left:857.50px;top:64.80px;font-size:17.97px;line-height:17.97px;color:#262626;transform:scaleX(1.0737)">Acrobat</div>
<div class="t" style="left:960.00px;top:64.80px;font-size:17.97px;line-height:17.97px;color:#2d5fb3;transform:scaleX(1.0691)">Table Design</div>
<div class="t" style="left:1104.52px;top:64.80px;font-size:17.97px;line-height:17.97px;color:#2d5fb3;transform:scaleX(1.0839)">Layout</div>
<div class="t" style="left:1606.70px;top:66.60px;font-size:18.43px;line-height:18.43px;color:#151515;transform:scaleX(1.0058)">Comments</div>
<div class="t" style="left:1762.49px;top:66.60px;font-size:18.70px;line-height:18.70px;color:#151515;transform:scaleX(1.0135)">Editing</div>
<div class="t" style="left:1907.00px;top:66.60px;font-size:18.43px;line-height:18.43px;color:#ffffff;font-weight:bold;transform:scaleX(0.9427)">Share</div>
<div class="t" style="left:27.48px;top:155.80px;font-size:14.64px;line-height:14.64px;color:#8c8c8c;transform:scaleX(1.0203)">Paste</div>
<div class="t" style="left:152.00px;top:116.20px;font-size:16.86px;line-height:16.86px;color:#111;transform:scaleX(1.0321)">Calibri</div>
<div class="t" style="left:291.77px;top:115.20px;font-size:17.10px;line-height:17.10px;color:#111;transform:scaleX(0.8252)">11</div>
<div class="t" style="left:154.06px;top:158.00px;font-size:18.12px;line-height:18.12px;color:#222;font-weight:bold;transform:scaleX(0.8417)">B</div>
<div class="t" style="left:192.00px;top:157.00px;font-size:19.23px;line-height:19.23px;color:#222;font-style:italic;font-family:'Liberation Serif'">I</div>
<div class="t" style="left:223.86px;top:158.00px;font-size:18.12px;line-height:18.12px;color:#222;transform:scaleX(1.1364)">U</div>
<div class="t" style="left:274.50px;top:162.00px;font-size:13.01px;line-height:13.01px;color:#333;transform:scaleX(1.4055)">ab</div>
<div class="t" style="left:316.40px;top:159.30px;font-size:17.59px;line-height:17.59px;color:#222;transform:scaleX(1.1778)">x</div>
<div class="t" style="left:351.50px;top:159.30px;font-size:17.59px;line-height:17.59px;color:#222;transform:scaleX(1.1667)">x</div>
<div class="t" style="left:326.80px;top:170.20px;font-size:11.00px;line-height:11.00px;color:#3a78d0;font-weight:bold;transform:scaleX(0.7333)">2</div>
<div class="t" style="left:362.30px;top:155.30px;font-size:10.71px;line-height:10.71px;color:#3a78d0;font-weight:bold;transform:scaleX(0.8167)">2</div>
<div class="t" style="left:460.00px;top:114.40px;font-size:19.42px;line-height:19.42px;color:#222;transform:scaleX(0.9313);-webkit-text-stroke-width:0">Aa</div>
<div class="t" style="left:648.90px;top:112.10px;font-size:7.97px;line-height:7.97px;color:#3a78d0;font-weight:bold;transform:scaleX(0.7200)">1</div>
<div class="t" style="left:648.70px;top:120.60px;font-size:7.71px;line-height:7.71px;color:#3a78d0;font-weight:bold">2</div>
<div class="t" style="left:648.70px;top:128.80px;font-size:7.86px;line-height:7.86px;color:#3a78d0;font-weight:bold;transform:scaleX(0.8000)">3</div>
<div class="t" style="left:701.30px;top:112.10px;font-size:7.97px;line-height:7.97px;color:#3a78d0;font-weight:bold;transform:scaleX(0.6600)">1</div>
<div class="t" style="left:704.80px;top:118.60px;font-size:10.00px;line-height:10.00px;color:#3a78d0;font-weight:bold;transform:scaleX(0.8667)">a</div>
<div class="t" style="left:712.60px;top:127.80px;font-size:8.90px;line-height:8.90px;color:#3a78d0;font-weight:bold;transform:scaleX(0.8000)">i</div>
<div class="t" style="left:1022.60px;top:125.00px;font-size:13.57px;line-height:13.57px;color:#111;transform:scaleX(0.9514)">AaBbCcDdEe</div>
<div class="t" style="left:1039.61px;top:155.60px;font-size:13.91px;line-height:13.91px;color:#222;transform:scaleX(0.9857)">Normal</div>
<div class="t" style="left:1133.40px;top:125.00px;font-size:13.57px;line-height:13.57px;color:#111;transform:scaleX(0.9575)">AaBbCcDdEe</div>
<div class="t" style="left:1137.78px;top:155.60px;font-size:13.52px;line-height:13.52px;color:#222;transform:scaleX(1.0196)">No Spacing</div>
<div class="t" style="left:1260.00px;top:156.00px;font-size:14.08px;line-height:14.08px;color:#1a1a1a;transform:scaleX(1.0967)">Styles</div>
<div class="t" style="left:1262.97px;top:173.00px;font-size:14.49px;line-height:14.49px;color:#1a1a1a;transform:scaleX(1.0253)">Pane</div>
<div class="t" style="left:1338.41px;top:156.20px;font-size:14.78px;line-height:14.78px;color:#1a1a1a;transform:scaleX(1.0884)">Dictate</div>
<div class="t" style="left:1425.00px;top:156.20px;font-size:14.37px;line-height:14.37px;color:#8e8e8e;transform:scaleX(1.0816)">Sensitivity</div>
<div class="t" style="left:1532.70px;top:156.20px;font-size:14.78px;line-height:14.78px;color:#1a1a1a;transform:scaleX(1.0688)">Add-ins</div>
<div class="t" style="left:1622.40px;top:156.20px;font-size:14.35px;line-height:14.35px;color:#1a1a1a;transform:scaleX(1.0966)">Editor</div>
<div class="t" style="left:1709.80px;top:156.20px;font-size:14.14px;line-height:14.14px;color:#1a1a1a;transform:scaleX(1.0461)">Create PDF</div>
<div class="t" style="left:1700.80px;top:173.70px;font-size:13.97px;line-height:13.97px;color:#1a1a1a;transform:scaleX(1.1082)">and share link</div>
<div class="t" style="left:1814.11px;top:156.20px;font-size:14.14px;line-height:14.14px;color:#1a1a1a;transform:scaleX(1.0893)">Request</div>
<div class="t" style="left:1806.70px;top:172.70px;font-size:14.37px;line-height:14.37px;color:#1a1a1a;transform:scaleX(1.0735)">Signatures</div>
<div class="t" style="left:675.80px;top:281.30px;font-size:10.57px;line-height:10.57px;color:#0d0d0d;transform:scaleX(0.9567)">2304</div>
<div class="t" style="left:746.40px;top:282.30px;font-size:10.42px;line-height:10.42px;color:#0d0d0d;transform:scaleX(0.9591)">DALIEN AVE, SUITE 123 LOS ANGELES. CA 90014 (213) 622-4298 • (800) 262.3999 • FAX:</div>
<div class="t" style="left:676.70px;top:297.60px;font-size:10.43px;line-height:10.43px;color:#0d0d0d">(213) 627-9248</div>
<div class="t" style="left:1184.70px;top:256.30px;font-size:10.57px;line-height:10.57px;color:#0d0d0d;transform:scaleX(0.8920)">INVOICE</div>
<div class="t" style="left:1183.80px;top:272.60px;font-size:10.43px;line-height:10.43px;color:#0d0d0d;transform:scaleX(0.9171)">NUMBER</div>
<div class="t" style="left:1177.70px;top:290.70px;font-size:10.28px;line-height:10.28px;color:#0d0d0d;transform:scaleX(0.9116)">CUSTOMER</div>
<div class="t" style="left:1183.00px;top:305.80px;font-size:10.00px;line-height:10.00px;color:#0d0d0d;transform:scaleX(0.9858)">NUMBER</div>
<div class="t" style="left:1239.50px;top:266.30px;font-size:16.71px;line-height:16.71px;color:#0d0d0d;transform:scaleX(0.9703)">348901</div>
<div class="t" style="left:1237.75px;top:300.70px;font-size:14.00px;line-height:14.00px;color:#0d0d0d;transform:scaleX(0.9467)">MARINI</div>
<div class="t" style="left:674.30px;top:352.30px;font-size:12.82px;line-height:12.82px;color:#0d0d0d;transform:scaleX(0.9365)">SOLD TO:</div>
<div class="t" style="left:717.08px;top:381.80px;font-size:13.43px;line-height:13.43px;color:#0d0d0d;transform:scaleX(0.9200)">MARIN JEWELRY (HIGHF</div>
<div class="t" style="left:694.00px;top:401.60px;font-size:13.24px;line-height:13.24px;color:#0d0d0d;transform:scaleX(0.9048)">576 RADFORD STREET.</div>
<div class="t" style="left:693.20px;top:421.90px;font-size:13.29px;line-height:13.29px;color:#0d0d0d;transform:scaleX(0.9634)">TACOMA, KY 40201</div>
<div class="t" style="left:879.30px;top:351.70px;font-size:13.66px;line-height:13.66px;color:#0d0d0d;transform:scaleX(0.8905)">SHIP TO:</div>
<div class="t" style="left:885.00px;top:379.30px;font-size:13.43px;line-height:13.43px;color:#0d0d0d;transform:scaleX(0.8979)">MARIN JEWELRY (HIGHFIED JLRY CORP)</div>
<div class="t" style="left:886.60px;top:400.10px;font-size:13.52px;line-height:13.52px;color:#0d0d0d;transform:scaleX(0.8859)">576 RADFORD STREET.</div>
<div class="t" style="left:886.30px;top:419.40px;font-size:13.71px;line-height:13.71px;color:#0d0d0d;transform:scaleX(0.9320)">TACOMA, KY 40201</div>
<div class="t" style="left:813.70px;top:469.80px;font-size:10.00px;line-height:10.00px;color:#0d0d0d;transform:scaleX(0.9280)">INVOICE DATE</div>
<div class="t" style="left:917.60px;top:469.00px;font-size:12.11px;line-height:12.11px;color:#0d0d0d;transform:scaleX(0.8375)">SALESPERSON</div>
<div class="t" style="left:1027.30px;top:469.80px;font-size:11.55px;line-height:11.55px;color:#0d0d0d;transform:scaleX(0.9254)">SHIPPED VIA</div>
<div class="t" style="left:1157.60px;top:470.00px;font-size:10.00px;line-height:10.00px;color:#0d0d0d;transform:scaleX(0.9517)">F.O.B.</div>
<div class="t" style="left:1301.30px;top:469.80px;font-size:10.14px;line-height:10.14px;color:#0d0d0d;transform:scaleX(0.9024)">TERMS</div>
<div class="t" style="left:1020.15px;top:502.50px;font-size:13.86px;line-height:13.86px;color:#0d0d0d;transform:scaleX(0.8547)">PICKUP</div>
<div class="t" style="left:1125.94px;top:501.50px;font-size:13.86px;line-height:13.86px;color:#0d0d0d;transform:scaleX(0.8593)">FANCY</div>
<div class="t" style="left:1240.80px;top:500.20px;font-size:13.43px;line-height:13.43px;color:#0d0d0d;transform:scaleX(0.9071)">C.O.D.</div>
<div class="t" style="left:686.60px;top:522.60px;font-size:10.00px;line-height:10.00px;color:#0d0d0d;transform:scaleX(0.9570)">OUANTITY</div>
<div class="t" style="left:811.90px;top:522.60px;font-size:10.14px;line-height:10.14px;color:#0d0d0d;transform:scaleX(0.9667)">ITEM #</div>
<div class="t" style="left:1022.13px;top:522.00px;font-size:12.25px;line-height:12.25px;color:#0d0d0d;transform:scaleX(0.8672)">DESCRIPTION</div>
<div class="t" style="left:1236.30px;top:522.00px;font-size:11.00px;line-height:11.00px;color:#0d0d0d;transform:scaleX(0.8435)">UNIT PRICE</div>
<div class="t" style="left:702.60px;top:561.00px;font-size:17.71px;line-height:17.71px;color:#0d0d0d;transform:scaleX(0.9681)">37 .40</div>
<div class="t" style="left:712.10px;top:591.50px;font-size:17.29px;line-height:17.29px;color:#0d0d0d;transform:scaleX(1.0133)">5 .40</div>
<div class="t" style="left:717.20px;top:621.70px;font-size:17.29px;line-height:17.29px;color:#0d0d0d;transform:scaleX(1.0060)">5.30</div>
<div class="t" style="left:762.74px;top:558.50px;font-size:13.66px;line-height:13.66px;color:#0d0d0d;transform:scaleX(0.8635)">ROPEROSE3U</div>
<div class="t" style="left:763.80px;top:589.00px;font-size:13.71px;line-height:13.71px;color:#0d0d0d;transform:scaleX(0.8972)">ITULCH</div>
<div class="t" style="left:764.20px;top:619.40px;font-size:13.77px;line-height:13.77px;color:#0d0d0d;transform:scaleX(0.8919)">WHITEUL</div>
<div class="t" style="left:895.86px;top:564.00px;font-size:13.38px;line-height:13.38px;color:#0d0d0d;transform:scaleX(0.9382)">14K ROSE ROPE CHAIN (3MM &amp; UP) SHaoa</div>
<div class="t" style="left:896.28px;top:587.50px;font-size:13.57px;line-height:13.57px;color:#0d0d0d;transform:scaleX(0.9166)">14K ULTRALIGHT CHAIN</div>
<div class="t" style="left:896.25px;top:626.20px;font-size:13.14px;line-height:13.14px;color:#0d0d0d;transform:scaleX(0.9500)">14K WHITE ULTRALIGHT CHAIN</div>
<div class="t" style="left:1250.80px;top:553.30px;font-size:18.29px;line-height:18.29px;color:#0d0d0d;transform:scaleX(0.9481)">33 .73</div>
<div class="t" style="left:1250.80px;top:582.50px;font-size:18.14px;line-height:18.14px;color:#0d0d0d;transform:scaleX(0.9680)">35. 88</div>
<div class="t" style="left:1250.80px;top:613.30px;font-size:18.29px;line-height:18.29px;color:#0d0d0d;transform:scaleX(0.9620)">36 .38</div>
<div class="t" style="left:728.05px;top:1000.40px;font-size:14.00px;line-height:14.00px;color:#0d0d0d;transform:scaleX(0.9492)">Price of 24K Gold Fix per ounce</div>
<div class="t" style="left:990.63px;top:1000.40px;font-size:14.00px;line-height:14.00px;color:#0d0d0d;transform:scaleX(0.9682)">1570 .70</div>
<div class="t" style="left:709.40px;top:1020.00px;font-size:14.29px;line-height:14.29px;color:#0d0d0d;transform:scaleX(0.9227)">Total Grams Purchased</div>
<div class="t" style="left:928.00px;top:1020.00px;font-size:14.29px;line-height:14.29px;color:#0d0d0d;transform:scaleX(0.9313)">48 .10</div>
<div class="t" style="left:757.44px;top:1043.00px;font-size:23.19px;line-height:23.19px;color:#0d0d0d;transform:scaleX(0.9636)">1</div>
<div class="t" style="left:1231.70px;top:1011.80px;font-size:11.55px;line-height:11.55px;color:#0d0d0d;transform:scaleX(0.9090)">SUBTOTAL</div>
<div class="t" style="left:1332.74px;top:996.00px;font-size:16.86px;line-height:16.86px;color:#0d0d0d;transform:scaleX(1.0581)">1648</div>
<div class="t" style="left:1332.90px;top:1022.40px;font-size:16.86px;line-height:16.86px;color:#0d0d0d;transform:scaleX(1.0235)">06</div>
<div class="t" style="left:1231.70px;top:1095.30px;font-size:12.57px;line-height:12.57px;color:#0d0d0d;transform:scaleX(0.8454)">TOTAL DUE</div>
<div class="t" style="left:1332.93px;top:1128.00px;font-size:16.86px;line-height:16.86px;color:#0d0d0d;transform:scaleX(1.0747)">1648</div>
<div class="t" style="left:783.30px;top:1083.70px;font-size:11.27px;line-height:11.27px;color:#0d0d0d;transform:scaleX(0.9625)">NO RETURNS ACCEPTED WITHOUT PRIOR AUTHORIZATION.</div>
<div class="t" style="left:674.10px;top:1101.90px;font-size:10.00px;line-height:10.00px;color:#0d0d0d;transform:scaleX(0.9231);word-spacing:0.55px;letter-spacing:0.087px">THE TERMS AND CONDITIONS OF THIS AGREEMENT ARE SPECIFICALLY SET FORTH IN THE FOLLOWING PAGE. THE</div>
<div class="t" style="left:674.10px;top:1117.10px;font-size:10.00px;line-height:10.00px;color:#0d0d0d;transform:scaleX(0.9231);word-spacing:1.19px;letter-spacing:0.186px">TERMS AND CONDmoNS INCLUDE, BUT ARE NOT LIMITED TO THE FOLLOWING: NO RETURNS OF MERCHANDISE</div>
<div class="t" style="left:674.10px;top:1132.40px;font-size:10.00px;line-height:10.00px;color:#0d0d0d;transform:scaleX(0.9231);word-spacing:1.12px;letter-spacing:0.134px">WILL BE ACCEPTED WITHOUT PRIOR WRITTEN AUTHORIZATION. CUSTOMER (PURCHASER) IS RESPONSIBLE FOR</div>
<div class="t" style="left:674.10px;top:1147.70px;font-size:10.00px;line-height:10.00px;color:#0d0d0d;transform:scaleX(0.9231)">LATE CHARGES AT THE MONTHLY INTEREST RATE OF 1 UNTIL THE INVOICE IS PAID IN FULL. CUSTOMER (PURCHASER)</div>
<div class="t" style="left:674.10px;top:1163.10px;font-size:10.00px;line-height:10.00px;color:#0d0d0d;transform:scaleX(0.9231);word-spacing:0.20px;letter-spacing:0.031px">IS LIABLE FOR ALL COLLECTION FEES, INCLUDING BUT NOT LIMITED TO COSTS AND ATTORNEY&#x27;S FEES INCURRED IN</div>
<div class="t" style="left:674.10px;top:1178.10px;font-size:10.14px;line-height:10.14px;color:#0d0d0d;transform:scaleX(0.9231)">RELATION THERETO.</div>
<div class="t" style="left:33.08px;top:1226.40px;font-size:17.97px;line-height:17.97px;color:#474747;transform:scaleX(0.9239)">Page 1 of 1</div>
<div class="t" style="left:147.00px;top:1226.40px;font-size:17.71px;line-height:17.71px;color:#474747;transform:scaleX(0.9899)">202 words</div>
<div class="t" style="left:302.99px;top:1226.40px;font-size:17.46px;line-height:17.46px;color:#474747;transform:scaleX(1.0075)">English (United States)</div>
<div class="t" style="left:537.60px;top:1226.40px;font-size:17.97px;line-height:17.97px;color:#474747;transform:scaleX(0.9828)">Accessibility: Investigate</div>
<div class="t" style="left:1442.44px;top:1225.70px;font-size:16.23px;line-height:16.23px;color:#474747;transform:scaleX(1.0614)">Focus</div>
<div class="t" style="left:1921.71px;top:1227.20px;font-size:16.71px;line-height:16.71px;color:#474747;transform:scaleX(0.9870)">119%</div>
</body></html>
